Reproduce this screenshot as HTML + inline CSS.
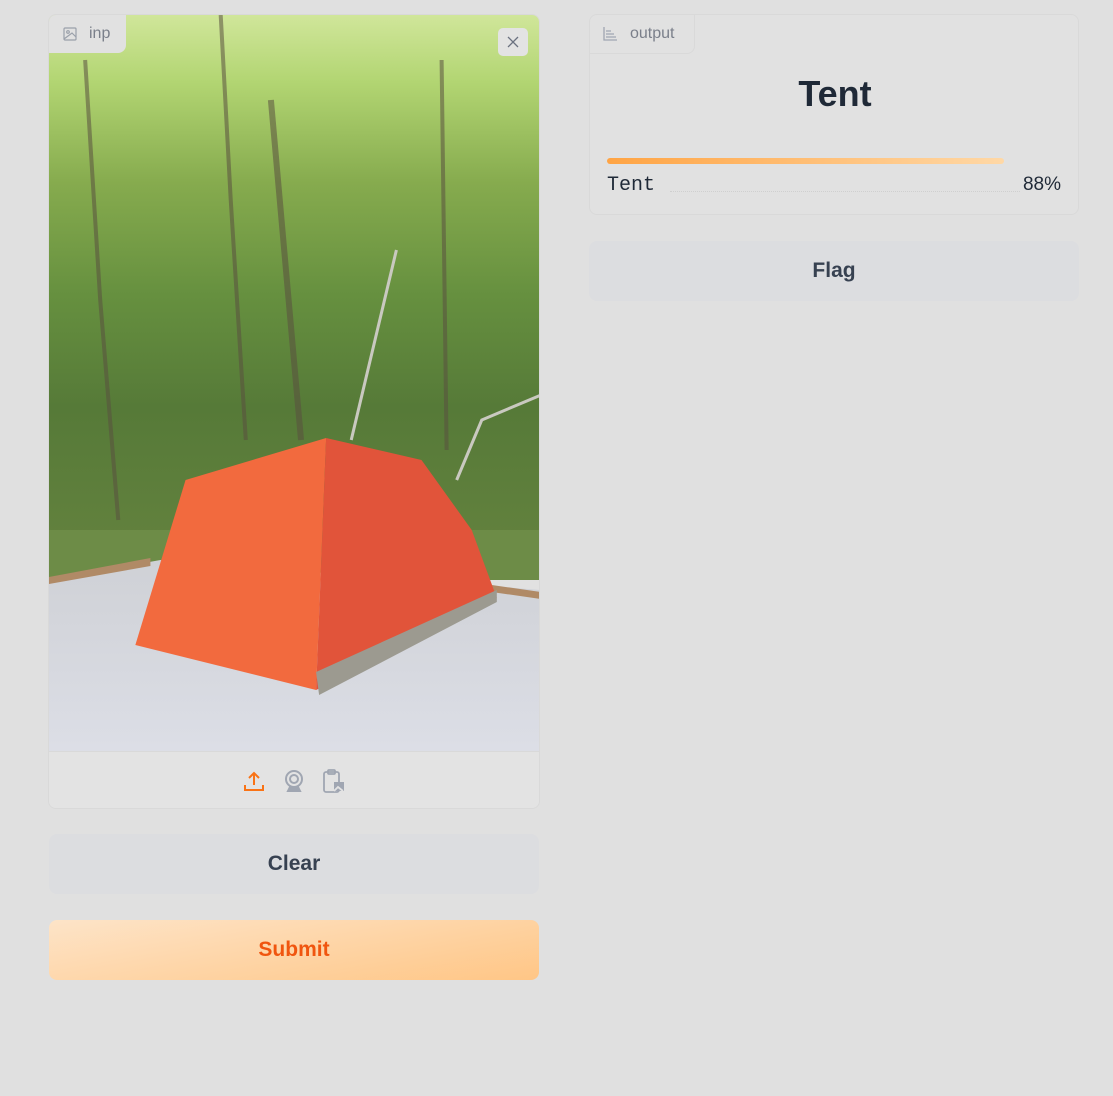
<!DOCTYPE html>
<html><head><style>
body{margin:0;width:1113px;height:1096px;background:#e0e0e0;font-family:"Liberation Sans",sans-serif;position:relative;overflow:hidden}
.abs{position:absolute}
.panel{background:#e1e1e1;border:1px solid #d9d9d9;border-radius:8px;box-sizing:border-box}
.btn{border-radius:8px;display:flex;align-items:center;justify-content:center;font-weight:bold;font-size:21px;box-sizing:border-box}
</style></head><body>
<div class="abs panel" style="left:48px;top:14px;width:492px;height:795px;overflow:hidden">
  <svg class="abs" style="left:0;top:0" width="492" height="736" viewBox="49 15 490 736" preserveAspectRatio="none">
    <defs>
      <linearGradient id="f" x1="0" y1="0" x2="0" y2="1">
        <stop offset="0" stop-color="#d0e69a"/>
        <stop offset="0.12" stop-color="#b2d572"/>
        <stop offset="0.3" stop-color="#86ab4e"/>
        <stop offset="0.5" stop-color="#66903f"/>
        <stop offset="0.7" stop-color="#567a38"/>
        <stop offset="1" stop-color="#65833f"/>
      </linearGradient>
      <linearGradient id="g" x1="0" y1="0" x2="0" y2="1">
        <stop offset="0" stop-color="#cfd1d6"/><stop offset="1" stop-color="#dcdee6"/>
      </linearGradient>
    </defs>
    <rect x="49" y="15" width="490" height="560" fill="url(#f)"/>
    <rect x="49" y="530" width="490" height="50" fill="#6d8c47"/>
    <g stroke="#5a5040" stroke-width="4" fill="none" opacity=".55">
      <path d="M220 15 L230 200 L245 440"/>
      <path d="M270 100 L300 440" stroke-width="6"/>
      <path d="M85 60 L100 300 L118 520"/>
      <path d="M440 60 L445 450"/>
    </g>
    <g stroke="#c9c9c0" stroke-width="3" fill="none">
      <path d="M395 250 L350 440"/>
      <path d="M539 395 L480 420 L455 480"/>
    </g>
    <path d="M49 580 L160 560 L539 590 L539 751 L49 751Z" fill="url(#g)"/>
    <path d="M49 577 L150 558 L150 566 L49 584Z" fill="#b08a66"/>
    <path d="M490 585 L539 592 L539 599 L490 592Z" fill="#b08a66"/>
    <path d="M325 438 L185 480 L135 645 L315 690 Z" fill="#f26a3e"/>
    <path d="M325 438 L420 460 L470 530 L495 598 L315 690 Z" fill="#e1543a"/>
    <path d="M315 672 L495 590 L495 602 L318 695 Z" fill="#9c9a90"/>
  </svg>
  <div class="abs" style="left:0;top:0;width:77px;height:38px;background:#e1e1e1;border-radius:0 0 8px 0;display:flex;align-items:center;font-size:16px;color:#7a7f8a">
    <svg style="margin:0 12px 0 14px" width="14" height="14" viewBox="0 0 14 14" fill="none" stroke="#9aa0aa" stroke-width="1.2"><rect x="1" y="1" width="12" height="12" rx="1"/><circle cx="5" cy="5" r="1.3"/><path d="M1 12 L9 6 L13 10"/></svg>inp</div>
  <div class="abs" style="left:449px;top:13px;width:30px;height:28px;background:#e3e3e3;border-radius:5px;display:flex;align-items:center;justify-content:center">
    <svg width="12" height="12" viewBox="0 0 12 12" stroke="#6b7280" stroke-width="1.3"><path d="M1 1L11 11M11 1L1 11"/></svg></div>
  <div class="abs" style="left:0;top:736px;width:492px;height:59px;background:#e3e3e3;border-top:1px solid #d9d9d9">
    <svg class="abs" style="left:193px;top:18px" width="24" height="24" viewBox="0 0 24 24" fill="none" stroke="#f97316" stroke-width="2"><path d="M12 15V3M7 8l5-5 5 5M3 15v5h18v-5"/></svg>
    <svg class="abs" style="left:233px;top:17px" width="24" height="26" viewBox="0 0 24 26" fill="none" stroke="#a0a6b2" stroke-width="2"><circle cx="12" cy="10" r="8"/><circle cx="12" cy="10" r="4"/><path d="M6 22h12l-2-4H8z" fill="#a0a6b2"/></svg>
    <svg class="abs" style="left:273px;top:16px" width="24" height="26" viewBox="0 0 24 26" fill="none" stroke="#a0a6b2" stroke-width="1.8"><rect x="2" y="4" width="15" height="20" rx="2"/><rect x="6" y="2" width="7" height="4" rx="1"/><rect x="12" y="14" width="10" height="9" fill="#a0a6b2" stroke="none"/><path d="M12 23l4-4 5 4" stroke="#e3e3e3"/></svg>
  </div>
</div>
<div class="abs btn" style="left:49px;top:834px;width:490px;height:60px;background:#dcdde0;color:#374151">Clear</div>
<div class="abs btn" style="left:49px;top:920px;width:490px;height:60px;background:linear-gradient(170deg,#fde4c8,#ffc686);color:#f0550f">Submit</div>

<div class="abs panel" style="left:589px;top:14px;width:490px;height:201px">
  <div class="abs" style="left:0;top:0;width:104px;height:38px;border-right:1px solid #d9d9d9;border-bottom:1px solid #d9d9d9;border-radius:8px 0 8px 0;display:flex;align-items:center;font-size:16px;color:#7a7f8a">
    <svg style="margin:0 13px 0 13px" width="14" height="14" viewBox="0 0 14 14" fill="none" stroke="#a0a6b2" stroke-width="1.3"><path d="M1 0V13H14M3 4h5M3 7h8M3 10h10"/></svg>output</div>
  <div class="abs" style="left:0;top:58px;width:490px;text-align:center;font-size:36px;font-weight:bold;color:#1f2937">Tent</div>
  <div class="abs" style="left:17px;top:143px;width:397px;height:6px;border-radius:3px;background:linear-gradient(90deg,#ffa444,#ffd8a6)"></div>
  <div class="abs" style="left:17px;top:159px;font-family:'Liberation Mono',monospace;font-size:20px;color:#1f2937">Tent</div>
  <div class="abs" style="left:80px;top:176px;width:350px;border-top:1px dotted #cfcfcf"></div>
  <div class="abs" style="right:17px;top:159px;font-size:19px;color:#1f2937">88%</div>
</div>
<div class="abs btn" style="left:589px;top:241px;width:490px;height:60px;background:#dcdde0;color:#374151">Flag</div>
</body></html>
